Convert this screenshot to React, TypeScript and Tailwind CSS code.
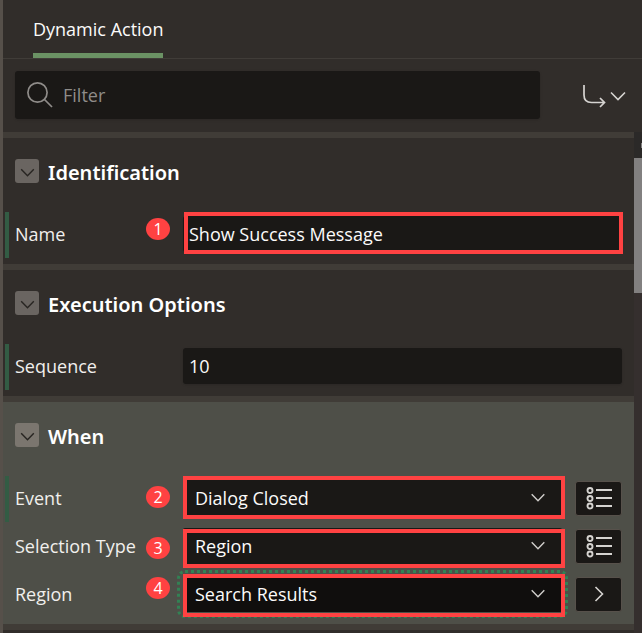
import type { ReactNode } from "react";

function Chevron({ className }: { className: string }) {
  return (
    <svg viewBox="0 0 16 10" className={className} fill="none" stroke="currentColor" aria-hidden="true">
      <path d="M1 1.5 L8 8.5 L15 1.5" strokeWidth="1.6" />
    </svg>
  );
}

function Badge({ n, place }: { n: number; place: string }) {
  return (
    <span
      className={`absolute right-[13px] flex h-[22px] w-6 items-center justify-center rounded-[50%] bg-[#ff4242] text-[16px] leading-none text-white ${place}`}
    >
      {n}
    </span>
  );
}

function Highlight({ place }: { place: string }) {
  return <span className={`pointer-events-none absolute border-4 border-[#ff4242] ${place}`} />;
}

function Section({ title, active, children }: { title: string; active?: boolean; children: ReactNode }) {
  return (
    <section className={`border-b-6 border-[#403c37] pb-[6px] ${active ? "bg-[#4e4f48]" : "bg-[#312d2a]"}`}>
      <header className="flex h-[72px] items-center gap-[9px] pb-[6px] pl-3">
        <button
          type="button"
          aria-label={`Collapse ${title}`}
          className={`flex size-6 items-center justify-center rounded-[3px] ${active ? "bg-[#7b766f]" : "bg-[#6a6561]"}`}
        >
          <Chevron className="mt-[3px] h-[9px] w-[15px] text-[#282522]" />
        </button>
        <h2 className="pt-[3px] font-['Noto_Sans',sans-serif] text-[20px] leading-6 font-semibold text-white">{title}</h2>
      </header>
      {children}
    </section>
  );
}

type RowProps = {
  id: string;
  label: string;
  changed?: boolean;
  badge?: ReactNode;
  children: ReactNode;
};

function Row({ id, label, changed, badge, children }: RowProps) {
  return (
    <div className="flex h-12 items-center pr-3">
      <span className={`ml-[2px] h-[46px] w-1 shrink-0 self-end ${changed ? "bg-[#335c44]" : ""}`} />
      <div className="relative flex h-12 w-[174px] shrink-0 items-center pl-[6px]">
        <label htmlFor={id} className="text-[18px] leading-6 text-[#f1efed]">
          {label}
        </label>
        {badge}
      </div>
      {children}
    </div>
  );
}

const inputStyle = "h-9 w-full min-w-0 rounded-[3px] bg-[#1a1816] px-[6px] text-[18px] text-[#fcfbfa] shadow-sm outline-none";

function Choice({ id, value, focused, mark }: { id: string; value: string; focused?: boolean; mark: string }) {
  return (
    <div className="relative min-w-0 flex-1">
      <select
        id={id}
        className={`block h-9 w-full appearance-none rounded-[2px] px-3 text-[18px] text-[#fcfbfa] ${
          focused ? "bg-[#100e0d] outline-3 outline-offset-3 outline-[#328254] outline-dotted" : "bg-[#1a1816]"
        }`}
      >
        <option>{value}</option>
      </select>
      <Chevron className="pointer-events-none absolute top-[13px] right-4 h-[9px] w-4 text-[#d0cecb]" />
      <Highlight place={mark} />
    </div>
  );
}

function SideButton({ label, children }: { label: string; children: ReactNode }) {
  return (
    <button
      type="button"
      aria-label={label}
      className="ml-[13px] flex h-[35px] w-[47px] shrink-0 items-center justify-center rounded-[3px] border border-[#57514b] bg-[#1a1816] text-[#d6d4d1]"
    >
      {children}
    </button>
  );
}

function ListIcon() {
  return (
    <svg viewBox="0 0 26 24" className="h-6 w-[26px]" fill="none" stroke="currentColor" aria-hidden="true">
      <g strokeWidth="1.9">
        <circle cx="4" cy="4.5" r="2.5" />
        <circle cx="4" cy="12.5" r="2.5" />
        <circle cx="4" cy="20" r="2.5" />
        <path d="M10 4 H26 M10 12 H26 M10 20 H26" />
      </g>
    </svg>
  );
}

export default function App() {
  return (
    <div className="flex min-h-screen flex-col border-l-3 border-[#56504a] bg-[#312d2a] font-['Open_Sans','Noto_Sans',sans-serif] text-[#fcfbfa]">
      <nav className="flex h-[59px] border-b border-[#403c38] pl-[30px]">
        <button type="button" className="border-b-5 border-[#6b9264] pt-1 text-[18px] leading-6">
          Dynamic Action
        </button>
      </nav>

      <div className="flex h-[73px] items-start justify-between pt-3 pr-4 pl-3">
        <label className="flex h-12 min-w-0 flex-1 items-center gap-[10px] rounded-[3px] bg-[#1a1816] pl-3 shadow-sm">
          <svg viewBox="0 0 26 26" className="size-[26px] shrink-0 text-[#8f8c89]" fill="none" stroke="currentColor" aria-hidden="true">
            <circle cx="10.5" cy="10.5" r="9.6" strokeWidth="1.7" />
            <path d="M17.5 17.5 L25 25" strokeWidth="1.7" />
          </svg>
          <input
            type="text"
            aria-label="Filter"
            placeholder="Filter"
            className="min-w-0 flex-1 bg-transparent text-[18px] outline-none placeholder:text-[#8f8c89]"
          />
        </label>
        <button type="button" aria-label="Go to group" className="ml-[42px] flex h-[50px] items-center gap-1 text-[#d6d4d1]">
          <svg viewBox="0 0 24 24" className="size-6" fill="none" stroke="currentColor" strokeWidth="1.7" aria-hidden="true">
            <path d="M2 1 V11 Q2 18.5 9.500 18.500 H22.500 M18 14 L22.500 18.500 L18 23" />
          </svg>
          <Chevron className="h-[10px] w-4" />
        </button>
      </div>

      <div className="flex flex-1">
        <main className="min-w-0 flex-1 border-t-6 border-[#403c37]">
          <Section title="Identification">
            <Row id="name" label="Name" changed badge={<Badge n={1} place="top-2" />}>
              <div className="relative flex-1">
                <input id="name" type="text" defaultValue="Show Success Message" className={inputStyle} />
                <Highlight place="-top-1 -right-px -bottom-[2px] left-px" />
              </div>
            </Row>
          </Section>

          <Section title="Execution Options">
            <Row id="sequence" label="Sequence" changed>
              <input id="sequence" type="text" defaultValue="10" className={inputStyle} />
            </Row>
          </Section>

          <Section title="When" active>
            <Row id="event" label="Event" changed badge={<Badge n={2} place="top-3" />}>
              <Choice id="event" value="Dialog Closed" mark="-top-1 -right-[3px] -bottom-[3px] left-0" />
              <SideButton label="Pick event">
                <ListIcon />
              </SideButton>
            </Row>
            <Row id="selection" label="Selection Type" badge={<Badge n={3} place="top-[15px]" />}>
              <Choice id="selection" value="Region" mark="top-px -right-[3px] -bottom-1 left-0" />
              <SideButton label="Pick selection type">
                <ListIcon />
              </SideButton>
            </Row>
            <Row id="region" label="Region" badge={<Badge n={4} place="top-[7px]" />}>
              <Choice id="region" value="Search Results" focused mark="-top-[2px] -right-[3px] -bottom-[5px] left-0" />
              <SideButton label="Go to region">
                <Chevron className="h-[10px] w-4 -rotate-90" />
              </SideButton>
            </Row>
          </Section>
        </main>

        <div className="w-2 shrink-0 bg-[#352f2e]" aria-hidden="true">
          <div className="flex h-[26px] items-center justify-end bg-[#2b2928]">
            <span className="h-[5px] w-px bg-[#828080]" />
          </div>
          <div className="h-[135px] bg-[#828080]" />
        </div>
      </div>
    </div>
  );
}
